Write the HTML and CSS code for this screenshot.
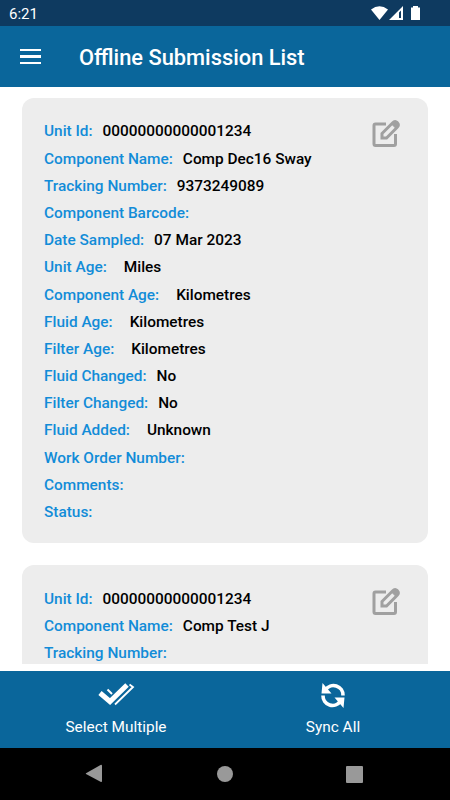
FILE: index.html
```html
<!DOCTYPE html>
<html lang="en">
<head>
    <meta charset="UTF-8">
    <meta name="viewport" content="width=device-width, initial-scale=1.0">
    <title>Offline Submission List</title>
    <link rel="stylesheet" href="styles.css">
</head>
<body>
    <div class="status-bar">
        <span class="clock">6:21</span>
        <svg class="status-icons" width="52" height="16" viewBox="0 0 52 16" fill="#fff">
            <path d="M1 4.500Q9.500 -2 18 4.500L9.500 15Z"/>
            <path fill-rule="evenodd" d="M33 1V15H19ZM31 5.500L29 7.500V13H31Z"/>
            <path d="M43 1h5v1.500h2V15h-9V2.500h2z"/>
        </svg>
    </div>

    <header class="app-bar">
        <button class="menu-button" aria-label="Menu">
            <span></span>
            <span></span>
            <span></span>
        </button>
        <h1>Offline Submission List</h1>
    </header>

    <main class="list">
        <section class="card">
            <dl>
                <div><dt>Unit Id:</dt><dd>00000000000001234</dd></div>
                <div><dt>Component Name:</dt><dd>Comp Dec16 Sway</dd></div>
                <div><dt>Tracking Number:</dt><dd>9373249089</dd></div>
                <div><dt>Component Barcode:</dt><dd></dd></div>
                <div><dt>Date Sampled:</dt><dd>07 Mar 2023</dd></div>
                <div><dt>Unit Age:</dt><dd class="unit">Miles</dd></div>
                <div><dt>Component Age:</dt><dd class="unit">Kilometres</dd></div>
                <div><dt>Fluid Age:</dt><dd class="unit">Kilometres</dd></div>
                <div><dt>Filter Age:</dt><dd class="unit">Kilometres</dd></div>
                <div><dt>Fluid Changed:</dt><dd>No</dd></div>
                <div><dt>Filter Changed:</dt><dd>No</dd></div>
                <div><dt>Fluid Added:</dt><dd class="unit">Unknown</dd></div>
                <div><dt>Work Order Number:</dt><dd></dd></div>
                <div><dt>Comments:</dt><dd></dd></div>
                <div><dt>Status:</dt><dd></dd></div>
            </dl>
            <svg class="edit-icon" width="30" height="30" viewBox="0 0 30 30" fill="none" stroke="#a0a0a0" stroke-width="3">
                <path d="M15 5H4.500Q3 5 3 6.500V25Q3 26.500 4.500 26.500H23Q24.500 26.500 24.500 25V15"/>
                <path d="M11 14.500L21.500 4Q24 1.500 26.300 3.700Q28.500 6 26 8.500L15.500 19H11Z"/>
                <path d="M20.500 5L25 9.500L27.500 6.500L24 2.500Z" fill="#a0a0a0" stroke-width="1"/>
            </svg>
        </section>

        <section class="card">
            <dl>
                <div><dt>Unit Id:</dt><dd>00000000000001234</dd></div>
                <div><dt>Component Name:</dt><dd>Comp Test J</dd></div>
                <div><dt>Tracking Number:</dt><dd></dd></div>
            </dl>
            <svg class="edit-icon" width="30" height="30" viewBox="0 0 30 30" fill="none" stroke="#a0a0a0" stroke-width="3">
                <path d="M15 5H4.500Q3 5 3 6.500V25Q3 26.500 4.500 26.500H23Q24.500 26.500 24.500 25V15"/>
                <path d="M11 14.500L21.500 4Q24 1.500 26.300 3.700Q28.500 6 26 8.500L15.500 19H11Z"/>
                <path d="M20.500 5L25 9.500L27.500 6.500L24 2.500Z" fill="#a0a0a0" stroke-width="1"/>
            </svg>
        </section>
    </main>

    <footer class="actions">
        <button class="action action-select">
            <svg width="38" height="26" viewBox="0 0 38 26" fill="none" stroke="#fff">
                <path d="M3 11L13 19.500L30 3" stroke-width="5"/>
                <path d="M10.500 7.500L15 12" stroke-width="2"/>
                <path d="M32.500 2.500L36 5L18 22.500" stroke-width="1.800"/>
            </svg>
            <span>Select Multiple</span>
        </button>
        <button class="action action-sync">
            <svg width="26" height="26" viewBox="0 0 26 26" fill="none" stroke="#fff" stroke-width="3.600">
                <path d="M5.500 8A9.500 9.500 0 0 1 23 13.500"/>
                <path d="M20.500 19A9.500 9.500 0 0 1 3 13.500"/>
                <path d="M2.500 1L1.500 11.500H11.500ZM23.500 26L24.500 15.500H14.500Z" fill="#fff" stroke="none"/>
            </svg>
            <span>Sync All</span>
        </button>
    </footer>

    <nav class="nav-bar">
        <svg width="18" height="20" viewBox="0 0 18 20" fill="#999"><path d="M1 9.200L15.500 1Q17 .4 17 2V17Q17 18.500 15.500 17.800L1 10Q.5 9.600 1 9.200Z"/></svg>
        <span class="nav-home"></span>
        <span class="nav-recent"></span>
    </nav>
</body>
</html>
```
FILE: styles.css
```css
* {
    box-sizing: border-box;
}
body {
    margin: 0;
    height: 800px;
    display: flex;
    flex-direction: column;
    overflow: hidden;
    background-color: #fff;
    font-family: Roboto, sans-serif;
    color: #000;
}
h1, dl, dd {
    margin: 0;
}
button {
    padding: 0;
    border: none;
    background: none;
    color: #fff;
    font-family: inherit;
    cursor: pointer;
}

.status-bar {
    flex: none;
    height: 26px;
    padding: 0 28px 0 9px;
    display: flex;
    align-items: center;
    justify-content: space-between;
    background-color: #0e3a60;
    color: #fff;
}
.clock {
    font-size: 15px;
    line-height: 26px;
    padding-top: 2px;
}

.app-bar {
    flex: none;
    height: 61px;
    padding-left: 20px;
    display: flex;
    align-items: center;
    background-color: #0a669b;
    color: #fff;
}
.menu-button {
    width: 21px;
    margin-right: 38px;
    display: flex;
    flex-direction: column;
    gap: 4px;
}
.menu-button span {
    height: 2.5px;
    width: 21px;
    background-color: #fff;
}
.app-bar h1 {
    font-size: 21.85px;
    font-weight: 500;
    padding-top: 2px;
}

.list {
    flex: none;
    height: 566px;
    margin: 11px 22px 7px;
    overflow: hidden;
}
.card {
    display: flex;
    justify-content: space-between;
    align-items: flex-start;
    margin-bottom: 22px;
    padding: 20.4px 27px 17px 22px;
    border-radius: 12px;
    background-color: #ededed;
}
.card dl div {
    display: flex;
    height: 27.2px;
    line-height: 27.2px;
    font-size: 15.4px;
    font-weight: 500;
    white-space: nowrap;
}
.card dt {
    color: #128cd8;
}
.card dd {
    margin-left: 10px;
}
.card dd.unit {
    margin-left: 17px;
}
.edit-icon {
    flex: none;
    margin-top: 1px;
}

.actions {
    flex: none;
    height: 77px;
    display: flex;
    background-color: #0a669b;
}
.action {
    display: flex;
    flex-direction: column;
    align-items: center;
    padding-top: 11px;
    gap: 9px;
    font-size: 15.4px;
    line-height: 21px;
}
.action-select {
    width: 232px;
}
.action-sync {
    width: 202px;
}

.nav-bar {
    flex: 1;
    padding: 0 87px 0 85px;
    display: flex;
    align-items: center;
    justify-content: space-between;
    background-color: #000;
}
.nav-home {
    width: 16px;
    height: 16px;
    border-radius: 50%;
    background-color: #999;
}
.nav-recent {
    width: 17px;
    height: 17px;
    border-radius: 1px;
    background-color: #999;
}
```
